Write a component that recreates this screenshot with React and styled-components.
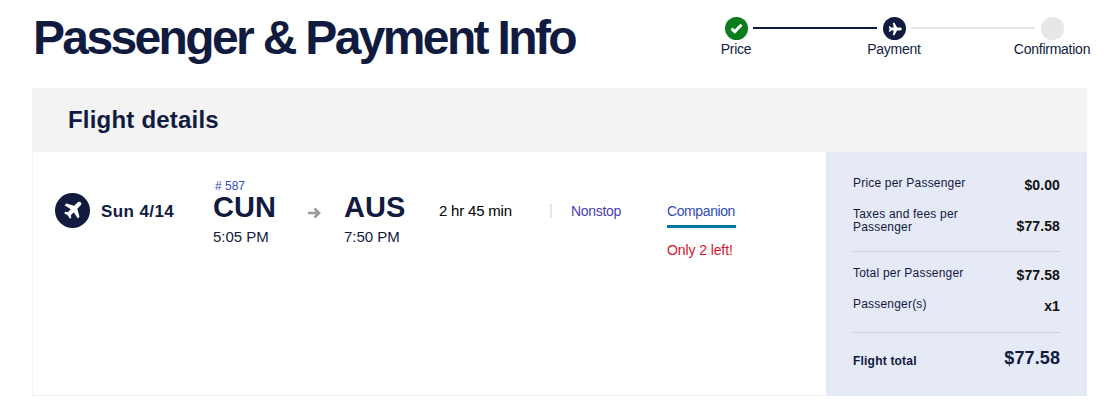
import React from 'react';
import styled, { createGlobalStyle } from 'styled-components';

const Global = createGlobalStyle`
  html, body { margin: 0; padding: 0; background: #fff; }
  body { font-family: "Liberation Sans", Arial, sans-serif; color: #111b40; }
`;

const Page = styled.div`
  width: 1110px;
  height: 404px;
  overflow: hidden;
  padding: 0 23px 0 32px;
  box-sizing: border-box;
`;

const Header = styled.header`
  display: flex;
  justify-content: space-between;
  height: 88px;
`;

const Title = styled.h1`
  margin: 10px 0 0 1px;
  font-size: 48px;
  line-height: 56px;
  font-weight: 700;
  letter-spacing: -2.65px;
  color: #111b40;
  white-space: nowrap;
`;

const Stepper = styled.div`
  display: flex;
  align-items: flex-start;
  margin: 17px -5px 0 0;
`;

const Step = styled.div`
  display: flex;
  flex-direction: column;
  align-items: center;
  width: 80px;
  font-size: 14px;
  line-height: 16px;
  letter-spacing: -0.25px;
  color: #111b40;
`;

const Dot = styled.div`
  width: 23px;
  height: 23px;
  border-radius: 50%;
  display: flex;
  align-items: center;
  justify-content: center;
  margin-bottom: 1px;
  background: ${(p) => p.$color};
`;

const Line = styled.div`
  width: 124px;
  height: 2px;
  margin: 10px -23px 0;
  background: ${(p) => p.$color};
`;

const Card = styled.section`
  display: flex;
  flex-direction: column;
`;

const CardHead = styled.div`
  height: 64px;
  padding-left: 36px;
  background: #f3f3f3;
  display: flex;
  align-items: center;
`;

const CardTitle = styled.h2`
  margin: 0 0 1px;
  font-size: 24px;
  line-height: 28px;
  font-weight: 700;
  letter-spacing: 0.2px;
  color: #111b40;
`;

const CardBody = styled.div`
  display: flex;
  height: 244px;
`;

const Flight = styled.div`
  flex: 1;
  display: flex;
  align-items: flex-start;
  box-sizing: border-box;
  border: 1px solid #f3f3f3;
  border-top: 0;
  border-right: 0;
  padding: 28px 0 0 22px;
`;

const PlaneBadge = styled.div`
  width: 35px;
  height: 35px;
  margin-top: 13px;
  border-radius: 50%;
  background: #111b40;
  display: flex;
  align-items: center;
  justify-content: center;
`;

const DateText = styled.div`
  width: 112px;
  margin: 23px 0 0 11px;
  font-size: 17px;
  line-height: 18px;
  font-weight: 700;
  letter-spacing: 0.4px;
`;

const Airport = styled.div`
  width: ${(p) => p.$width}px;
`;

const FlightNo = styled.div`
  height: 12px;
  padding-left: 2px;
  font-size: 12px;
  line-height: 12px;
  color: #304cb2;
`;

const Code = styled.div`
  margin-top: -2px;
  font-size: 29px;
  line-height: 34px;
  font-weight: 700;
`;

const Time = styled.div`
  margin-top: 5px;
  font-size: 15px;
  line-height: 16px;
`;

const ArrowBox = styled.div`
  width: 36px;
  margin-top: 25px;
`;

const Duration = styled.div`
  width: 111px;
  margin-top: 23px;
  font-size: 15px;
  line-height: 16px;
  letter-spacing: -0.2px;
  color: #000;
`;

const Stops = styled.div`
  width: 117px;
  margin-top: 23px;
  padding-left: 21px;
  box-sizing: border-box;
  font-size: 14px;
  line-height: 16px;
  letter-spacing: -0.3px;
  color: #4a3fb0;
  position: relative;

  &::before {
    content: '';
    position: absolute;
    left: 0;
    top: 1px;
    width: 2px;
    height: 14px;
    background: #e6e7e8;
  }
`;

const Fare = styled.div`
  margin-top: 23px;
  font-size: 14px;
  line-height: 16px;
  letter-spacing: -0.4px;
`;

const FareName = styled.div`
  width: 69px;
  height: 22px;
  color: #304cb2;
  border-bottom: 3px solid #00789f;
`;

const FareNote = styled.div`
  margin-top: 14px;
  letter-spacing: -0.1px;
  color: #d5152e;
`;

const Summary = styled.aside`
  width: 261px;
  box-sizing: border-box;
  background: #e6e9f6;
  padding: 25px 27px 0;
`;

const Row = styled.div`
  display: flex;
  justify-content: space-between;
  align-items: ${(p) => (p.$end ? 'flex-end' : 'flex-start')};
  margin-top: ${(p) => p.$top || 0}px;
  margin-bottom: ${(p) => p.$gap || 0}px;
`;

const Label = styled.div`
  width: 125px;
  margin-top: ${(p) => p.$shift || 0}px;
  font-size: 12px;
  line-height: 13px;
  letter-spacing: 0.2px;
  font-weight: ${(p) => (p.$bold ? 700 : 400)};
  color: #111b40;
  white-space: ${(p) => (p.$wrap ? 'normal' : 'nowrap')};
`;

const Amount = styled.div`
  font-size: ${(p) => p.$size || 14}px;
  line-height: 16px;
  font-weight: 700;
  letter-spacing: 0.1px;
  color: ${(p) => p.$color || '#111'};
`;

const Rule = styled.hr`
  margin: 0;
  border: 0;
  height: 1px;
  background: #cfd0d4;
`;

const PlaneIcon = ({ size, turned }) => (
  <svg
    width={size}
    height={size}
    viewBox="0 0 24 24"
    fill="#fff"
    style={turned ? { transform: 'rotate(45deg)' } : undefined}
  >
    <path d="M21.5 2.5c-1-1-2.8-.7-3.9.4L14 6.5 5 4 3 6l7 4.5-3.4 3.4-2.8-.5L2.5 15l4 2.5 2.5 4 1.6-1.3-.5-2.8 3.4-3.4L18 21l2-2-2.5-9 3.6-3.6c1.1-1.1 1.4-2.9.4-3.9z" />
  </svg>
);

const CheckIcon = () => (
  <svg width="13" height="11" viewBox="0 0 13 11">
    <path d="M1.5 5.6 4.8 8.6 11.5 1.8" fill="none" stroke="#fff" strokeWidth="3" />
  </svg>
);

const ArrowIcon = () => (
  <svg width="13" height="12" viewBox="0 0 13 12">
    <path d="M0 6h10M6.5 1.5 11 6l-4.5 4.5" fill="none" stroke="#9a9b9e" strokeWidth="2.6" />
  </svg>
);

export default function App() {
  return (
    <Page>
      <Global />
      <Header>
        <Title>Passenger &amp; Payment Info</Title>
        <Stepper>
          <Step>
            <Dot $color="#0a7d1e"><CheckIcon /></Dot>
            Price
          </Step>
          <Line $color="#111b40" />
          <Step>
            <Dot $color="#111b40"><PlaneIcon size={14} turned /></Dot>
            Payment
          </Step>
          <Line $color="#e6e7e8" />
          <Step>
            <Dot $color="#e6e7e8" />
            Confirmation
          </Step>
        </Stepper>
      </Header>
      <Card>
        <CardHead>
          <CardTitle>Flight details</CardTitle>
        </CardHead>
        <CardBody>
          <Flight>
            <PlaneBadge><PlaneIcon size={21} /></PlaneBadge>
            <DateText>Sun 4/14</DateText>
            <Airport $width={95}>
              <FlightNo># 587</FlightNo>
              <Code>CUN</Code>
              <Time>5:05 PM</Time>
            </Airport>
            <ArrowBox><ArrowIcon /></ArrowBox>
            <Airport $width={95}>
              <FlightNo />
              <Code>AUS</Code>
              <Time>7:50 PM</Time>
            </Airport>
            <Duration>2 hr 45 min</Duration>
            <Stops>Nonstop</Stops>
            <Fare>
              <FareName>Companion</FareName>
              <FareNote>Only 2 left!</FareNote>
            </Fare>
          </Flight>
          <Summary>
            <Row $gap={15}>
              <Label>Price per Passenger</Label>
              <Amount>$0.00</Amount>
            </Row>
            <Row $end $gap={17}>
              <Label $wrap>Taxes and fees per Passenger</Label>
              <Amount>$77.58</Amount>
            </Row>
            <Rule />
            <Row $top={15} $gap={15}>
              <Label>Total per Passenger</Label>
              <Amount>$77.58</Amount>
            </Row>
            <Row $gap={18}>
              <Label>Passenger(s)</Label>
              <Amount>x1</Amount>
            </Row>
            <Rule />
            <Row $top={17}>
              <Label $bold $shift={5}>Flight total</Label>
              <Amount $size={18} $color="#111b40">$77.58</Amount>
            </Row>
          </Summary>
        </CardBody>
      </Card>
    </Page>
  );
}
